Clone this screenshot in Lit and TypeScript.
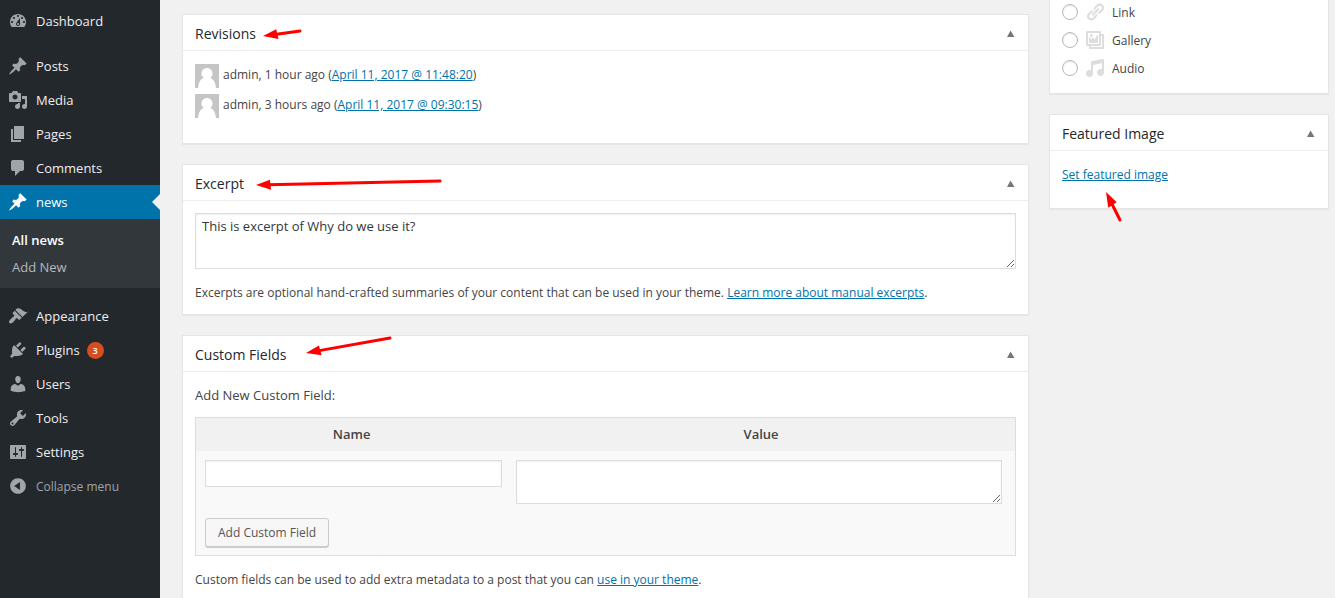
import { LitElement, html, css, svg, nothing } from "lit";
import { customElement, property } from "lit/decorators.js";

const ICONS: Record<string, string> = {
  dashboard:
    "M3.76 16h12.48c1.1-1.37 1.76-3.11 1.76-5 0-4.42-3.58-8-8-8s-8 3.58-8 8c0 1.89.66 3.63 1.76 5zM10 4c.55 0 1 .45 1 1s-.45 1-1 1-1-.45-1-1 .45-1 1-1zM6 6c.55 0 1 .45 1 1s-.45 1-1 1-1-.45-1-1 .45-1 1-1zm8 0c.55 0 1 .45 1 1s-.45 1-1 1-1-.45-1-1 .45-1 1-1zm-5.37 5.55L12 7v6c0 1.1-.9 2-2 2s-2-.9-2-2c0-.57.24-1.08.63-1.45zM4 10c.55 0 1 .45 1 1s-.45 1-1 1-1-.45-1-1 .45-1 1-1zm12 0c.55 0 1 .45 1 1s-.45 1-1 1-1-.45-1-1 .45-1 1-1zm-5 3c0-.55-.45-1-1-1s-1 .45-1 1 .45 1 1 1 1-.45 1-1z",
  pin: "M10.44 3.02l1.82-1.82 6.36 6.35-1.83 1.82c-1.05-.68-2.48-.57-3.41.36l-.75.75c-.92.93-1.04 2.35-.35 3.41l-1.83 1.82-2.41-2.41-2.8 2.79c-.42.42-3.38 2.71-3.8 2.29s1.86-3.39 2.28-3.81l2.79-2.79L4.1 9.36l1.83-1.82c1.05.69 2.48.57 3.4-.36l.75-.75c.93-.92 1.05-2.35.36-3.41z",
  media:
    "M13 11V4c0-.55-.45-1-1-1h-1.67L9 1H5L3.67 3H2c-.55 0-1 .45-1 1v7c0 .55.45 1 1 1h10c.55 0 1-.45 1-1zM7 4.5c1.38 0 2.5 1.12 2.5 2.5S8.38 9.5 7 9.5 4.5 8.38 4.5 7 5.62 4.5 7 4.5zM14 6h5v10.5c0 1.38-1.12 2.5-2.5 2.5S14 17.88 14 16.5s1.12-2.5 2.5-2.5c.17 0 .34.02.5.05V9h-3V6zm-4 8.05V13h2v3.5c0 1.38-1.12 2.5-2.5 2.5S7 17.88 7 16.5 8.12 14 9.500 14c.17 0 .34.02.5.05z",
  page: "M6 15V2h10v13H6zm-1 1h8v2H3V5h2v11z",
  comment:
    "M5 2h9c1.1 0 2 .9 2 2v7c0 1.1-.9 2-2 2h-2l-5 5v-5H5c-1.1 0-2-.9-2-2V4c0-1.1.9-2 2-2z",
  brush:
    "M14.48 11.06L7.41 3.99l1.5-1.5c.5-.56 2.3-.47 3.51.32 1.21.8 1.43 1.28 2.91 2.1 1.18.64 2.45 1.26 4.45.85zm-.71.71L6.7 4.7 4.93 6.47c-.39.39-.39 1.02 0 1.41l1.06 1.06c.39.39.39 1.03 0 1.42-.6.6-1.43 1.11-2.21 1.69-.35.26-.7.53-1.01.84C1.43 14.23.4 16.08 1.4 17.07c.99 1 2.84-.03 4.18-1.36.31-.31.58-.66.85-1.02.57-.78 1.08-1.61 1.69-2.21.39-.39 1.02-.39 1.41 0l1.06 1.06c.39.39 1.02.39 1.41 0z",
  plug: "M13.11 4.36L9.87 7.6 8 5.73l3.24-3.24c.35-.34 1.05-.2 1.56.32.52.51.66 1.21.31 1.55zm-8 1.77l.91-1.12 9.01 9.01-1.19.84c-.71.71-2.63 1.16-3.82 1.16H6.14L4.9 17.26c-.59.59-1.54.59-2.12 0-.59-.58-.59-1.53 0-2.12l1.24-1.24v-3.88c0-1.13.4-3.19 1.09-3.89zm7.26 3.97l3.24-3.24c.34-.35 1.04-.21 1.55.31.52.51.66 1.21.31 1.55l-3.24 3.25z",
  user: "M10 9.25c-2.27 0-2.73-3.44-2.73-3.44C7 4.02 7.82 2 9.97 2c2.16 0 2.98 2.02 2.71 3.81 0 0-.41 3.44-2.68 3.44zm0 2.57L12.72 10c2.39 0 4.52 2.33 4.52 4.53v2.49s-3.65 1.13-7.24 1.13c-3.65 0-7.24-1.13-7.24-1.13v-2.49c0-2.25 1.94-4.48 4.47-4.48z",
  wrench:
    "M16.68 9.77c-1.34 1.34-3.3 1.67-4.95.99l-5.41 6.52c-.99.99-2.59.99-3.58 0s-.99-2.59 0-3.57l6.52-5.42c-.68-1.65-.35-3.61.99-4.95 1.28-1.28 3.12-1.62 4.72-1.06l-2.89 2.89 2.82 2.82 2.86-2.87c.53 1.58.18 3.39-1.08 4.65zM3.81 16.21c.4.39 1.04.39 1.43 0 .4-.4.4-1.04 0-1.43-.39-.4-1.03-.4-1.43 0-.39.39-.39 1.03 0 1.43z",
  sliders:
    "M18 16V4c0-.55-.45-1-1-1H3c-.55 0-1 .45-1 1v12c0 .55.45 1 1 1h14c.55 0 1-.45 1-1zM8 11h1c.55 0 1 .45 1 1s-.45 1-1 1H8v1.5c0 .28-.22.5-.5.5s-.5-.22-.5-.5V13H6c-.55 0-1-.45-1-1s.45-1 1-1h1V5.5c0-.28.22-.5.5-.5s.5.22.5.5V11zm5-2h-1c-.55 0-1-.45-1-1s.45-1 1-1h1V5.5c0-.28.22-.5.5-.5s.5.22.5.5V7h1c.55 0 1 .45 1 1s-.45 1-1 1h-1v5.5c0 .28-.22.5-.5.5s-.5-.22-.5-.5V9z",
  collapse:
    "M10 2.16c4.33 0 7.84 3.51 7.84 7.84s-3.51 7.84-7.84 7.84S2.16 14.33 2.16 10 5.71 2.16 10 2.16zm2 11.72V6.12L6.18 9.97z",
  link: "M17.74 2.76c1.68 1.69 1.68 4.41 0 6.1l-1.53 1.52c-1.12 1.12-2.7 1.47-4.14 1.09l2.62-2.61.76-.77.76-.76c.84-.84.84-2.2 0-3.04-.84-.85-2.2-.85-3.04 0l-.77.76-3.38 3.38c-.37-1.44-.02-3.02 1.1-4.14l1.52-1.53c1.69-1.68 4.42-1.68 6.1 0zM8.59 13.43l5.34-5.34c.42-.42.42-1.1 0-1.52-.44-.43-1.13-.39-1.53 0l-5.33 5.34c-.42.42-.42 1.1 0 1.52.44.43 1.13.39 1.52 0zm-.76 2.29l4.14-4.15c.38 1.44.03 3.02-1.09 4.14l-1.52 1.53c-1.69 1.68-4.41 1.68-6.1 0-1.68-1.68-1.68-4.42 0-6.1l1.53-1.52c1.12-1.12 2.7-1.47 4.14-1.1l-4.14 4.15c-.85.84-.85 2.2 0 3.05.84.84 2.2.84 3.04 0z",
  gallery:
    "M16 4h1.96c.57 0 1.04.47 1.04 1.04v12.92c0 .57-.47 1.04-1.04 1.04H5.04C4.47 19 4 18.53 4 17.96V16H2.04C1.47 16 1 15.53 1 14.96V2.04C1 1.47 1.47 1 2.04 1h12.92c.57 0 1.04.47 1.04 1.04V4zM3 14h11V3H3v11zm5-8.5C8 4.67 7.33 4 6.5 4S5 4.67 5 5.5 5.67 7 6.5 7 8 6.33 8 5.5zm2 4.5s1-5 3-5v8H4V7c2 0 2 3 2 3s.33-2 2-2 2 2 2 2zm7 7V6h-1v8.96c0 .57-.47 1.04-1.04 1.04H6v1h11z",
  audio:
    "M6.99 3.08l11.02-2c.55-.08.99.45.99 1V14.5c0 1.94-1.57 3.5-3.5 3.5S12 16.44 12 14.5c0-1.93 1.57-3.5 3.5-3.5.54 0 1.04.14 1.5.35V5.08l-9 2V16c-.24 1.7-1.74 3-3.5 3C2.57 19 1 17.44 1 15.5 1 13.57 2.57 12 4.5 12c.54 0 1.04.14 1.5.35V4.08c0-.55.44-.91.99-1z",
};

const icon = (name: string) =>
  html`<svg class="icon" viewBox="0 0 20 20" width="20" height="20" aria-hidden="true">
    <path fill="currentColor" d=${ICONS[name]}></path>
  </svg>`;

interface MenuEntry {
  label: string;
  icon: string;
  count?: number;
  current?: boolean;
  submenu?: string[];
}

const MENU: MenuEntry[][] = [
  [{ label: "Dashboard", icon: "dashboard" }],
  [
    { label: "Posts", icon: "pin" },
    { label: "Media", icon: "media" },
    { label: "Pages", icon: "page" },
    { label: "Comments", icon: "comment" },
    { label: "news", icon: "pin", current: true, submenu: ["All news", "Add New"] },
  ],
  [
    { label: "Appearance", icon: "brush" },
    { label: "Plugins", icon: "plug", count: 3 },
    { label: "Users", icon: "user" },
    { label: "Tools", icon: "wrench" },
    { label: "Settings", icon: "sliders" },
  ],
];

@customElement("admin-menu")
export class AdminMenu extends LitElement {
  static styles = css`
    :host {
      display: flex;
      flex-direction: column;
      gap: 11px;
      flex: 0 0 160px;
      box-sizing: border-box;
      padding-top: 4px;
      background: #23282d;
      font-size: 13px;
      font-weight: 500;
      line-height: 34px;
    }
    ul {
      list-style: none;
      margin: 0;
      padding: 0;
    }
    .item,
    .collapse {
      display: flex;
      align-items: center;
      gap: 8px;
      height: 34px;
      padding: 0 0 0 8px;
      color: #eee;
      text-decoration: none;
    }
    .icon {
      flex: none;
      color: #a0a5aa;
    }
    .current {
      position: relative;
      background: #0073aa;
      color: #fff;
    }
    .current .icon {
      color: #fff;
    }
    .current::after {
      content: "";
      position: absolute;
      right: 0;
      top: 9px;
      border: 8px solid transparent;
      border-left-width: 0;
      border-right-color: #f1f1f1;
    }
    .count {
      width: 17px;
      height: 17px;
      margin-left: -1px;
      border-radius: 50%;
      background: #d54e21;
      color: #fff;
      font-size: 9px;
      font-weight: 600;
      line-height: 17px;
      text-align: center;
    }
    .submenu {
      padding: 8px 0 7px;
      background: #32373c;
      font-weight: 400;
      line-height: 27px;
    }
    .submenu a {
      display: block;
      padding: 0 12px;
      color: #b4b9be;
      text-decoration: none;
    }
    .submenu .selected {
      color: #fff;
      font-weight: 600;
    }
    .collapse {
      width: 100%;
      border: 0;
      background: none;
      color: #a0a5aa;
      font: inherit;
      font-size: 12px;
      font-weight: 400;
    }
    .collapse span {
      padding-top: 2px;
    }
  `;

  private entry(e: MenuEntry) {
    return html`<li>
      <a class="item ${e.current ? "current" : ""}" href="#">
        ${icon(e.icon)}<span>${e.label}</span>
        ${e.count ? html`<span class="count">${e.count}</span>` : nothing}
      </a>
      ${e.submenu
        ? html`<ul class="submenu">
            ${e.submenu.map(
              (s, i) => html`<li><a class=${i === 0 ? "selected" : ""} href="#">${s}</a></li>`
            )}
          </ul>`
        : nothing}
    </li>`;
  }

  render() {
    return MENU.map(
      (group, i) => html`<ul>
        ${group.map((e) => this.entry(e))}
        ${i === MENU.length - 1
          ? html`<li>
              <button class="collapse" type="button">${icon("collapse")}<span>Collapse menu</span></button>
            </li>`
          : nothing}
      </ul>`
    );
  }
}

@customElement("meta-box")
export class MetaBox extends LitElement {
  @property() heading = "";

  static styles = css`
    :host {
      display: block;
      border: 1px solid #e5e5e5;
      background: #fff;
      box-shadow: 0 1px 1px rgba(0, 0, 0, 0.04);
    }
    .head {
      display: flex;
      align-items: center;
      justify-content: space-between;
      height: 35px;
      padding: 0 12px;
      border-bottom: 1px solid #eee;
    }
    h2 {
      margin: 0;
      padding-top: 2px;
      color: #23282d;
      font-size: 14px;
      font-weight: 500;
      line-height: 20px;
    }
    .toggle {
      display: flex;
      padding: 0;
      border: 0;
      margin-right: 1px;
      background: none;
      color: #72777c;
    }
    .body {
      padding: 12px 12px 11px;
    }
  `;

  render() {
    return html`<div class="head">
        <h2>${this.heading}</h2>
        <button class="toggle" type="button" aria-label="Toggle panel: ${this.heading}">
          <svg width="8" height="9" viewBox="0 0 8 9" aria-hidden="true">
            <path fill="currentColor" d="M3.500 2.500L7.500 9H0z"></path>
          </svg>
        </button>
      </div>
      <div class="body"><slot></slot></div>`;
  }
}

const REVISIONS = [
  { author: "admin", ago: "1 hour ago", date: "April 11, 2017 @ 11:48:20" },
  { author: "admin", ago: "3 hours ago", date: "April 11, 2017 @ 09:30:15" },
];

const FORMATS = [
  { id: "link", label: "Link" },
  { id: "gallery", label: "Gallery" },
  { id: "audio", label: "Audio" },
];

/* Each arrow runs from its tail to its tip. */
const ARROWS = [
  { tail: [300, 31], tip: [263, 36] },
  { tail: [440, 181], tip: [256, 185] },
  { tail: [390, 338], tip: [306, 353] },
  { tail: [1120, 220], tip: [1106, 192] },
];

@customElement("app-root")
export class AppRoot extends LitElement {
  static styles = css`
    :host {
      position: relative;
      display: flex;
      height: 100vh;
      overflow: hidden;
      background: #f1f1f1;
      color: #444;
      font-family: "Open Sans", "Noto Sans", sans-serif;
      font-size: 12px;
      line-height: 20px;
    }
    .content {
      display: flex;
      flex: 1;
      align-items: flex-start;
      gap: 20px;
      min-width: 0;
      padding: 0 6px 0 22px;
    }
    .main {
      display: flex;
      flex: 1;
      flex-direction: column;
      gap: 20px;
      min-width: 0;
      padding-top: 14px;
    }
    .side {
      display: flex;
      flex: 0 0 280px;
      flex-direction: column;
      gap: 20px;
      min-width: 0;
    }
    a {
      color: #0073aa;
    }
    p {
      margin: 0;
    }
    .revisions {
      display: grid;
      gap: 6px;
      margin: 0;
      padding: 1px 0 14px;
      line-height: 22px;
      list-style: none;
    }
    .revisions li {
      display: flex;
      align-items: flex-start;
      gap: 4px;
      height: 24px;
    }
    .formats {
      display: grid;
      gap: 4px;
      margin: 0;
      padding: 0 12px 13px;
      border: 1px solid #e5e5e5;
      border-top: 0;
      background: #fff;
      box-shadow: 0 1px 1px rgba(0, 0, 0, 0.04);
    }
    .format {
      display: flex;
      align-items: center;
      height: 24px;
    }
    .format .icon {
      margin: 0 7px;
      color: #ddd;
    }
    .format label {
      padding-top: 2px;
    }
    .format input {
      width: 16px;
      height: 16px;
      margin: 0;
      border: 1px solid #b4b9be;
      border-radius: 50%;
      appearance: none;
      background: #fff;
      box-shadow: inset 0 1px 2px rgba(0, 0, 0, 0.1);
    }
    .field {
      display: block;
      box-sizing: border-box;
      width: 100%;
      margin: 0;
      border: 1px solid #ddd;
      border-radius: 0;
      background: #fff;
      box-shadow: inset 0 1px 2px rgba(0, 0, 0, 0.07);
      color: #32373c;
      font: inherit;
      font-size: 13px;
      padding: 2px 6px;
    }
    .excerpt {
      height: 56px;
    }
    .note {
      padding-top: 14px;
    }
    .featured {
      padding: 2px 0 12px;
    }
    .subtitle {
      padding: 1px 0 12px;
      font-size: 13px;
      font-weight: 500;
    }
    .newmeta {
      width: 100%;
      border: 1px solid #ddd;
      border-spacing: 0;
      table-layout: fixed;
      background: #f9f9f9;
    }
    .newmeta th {
      height: 31px;
      padding: 0 0 2px;
      background: #f1f1f1;
      font-size: 13px;
      font-weight: 600;
    }
    .newmeta td {
      padding: 9px 5px 0 9px;
      vertical-align: top;
    }
    .newmeta .value {
      padding: 9px 13px 0 9px;
    }
    .newmeta .actions {
      padding: 14px 9px 8px;
    }
    .name-col {
      width: 38%;
    }
    .name-field {
      height: 27px;
    }
    .value-field {
      height: 44px;
    }
    .button {
      height: 29px;
      padding: 0 12px;
      border: 1px solid #ccc;
      border-radius: 3px;
      background: #f7f7f7;
      box-shadow: 0 1px 0 #ccc;
      color: #555;
      font: inherit;
    }
    .arrows {
      position: absolute;
      inset: 0;
      width: 100%;
      height: 100%;
      pointer-events: none;
    }
  `;

  private arrow({ tail, tip }: { tail: number[]; tip: number[] }) {
    const angle = (Math.atan2(tip[1] - tail[1], tip[0] - tail[0]) * 180) / Math.PI;
    const length = Math.hypot(tip[0] - tail[0], tip[1] - tail[1]);
    return svg`<g transform="translate(${tip[0]} ${tip[1]}) rotate(${angle})">
      <path d="M${-length} 0H-12" stroke="#f00" stroke-width="3" stroke-linecap="round"></path>
      <path d="M0 0L-15 -5L-14 5z" fill="#f00"></path>
    </g>`;
  }

  render() {
    return html`
      <admin-menu></admin-menu>
      <div class="content">
        <main class="main">
          <meta-box heading="Revisions">
            <ul class="revisions">
              ${REVISIONS.map(
                (r) => html`<li>
                  <svg width="24" height="24" viewBox="0 0 24 24" aria-hidden="true">
                    <path fill="#c5c5c5" d="M0 0h24v24H0z"></path>
                    <path
                      fill="#fff"
                      d="M12 4a5.500 5.500 0 0 1 3.300 9.900c3.400 1.200 5.200 4.600 5.700 10.100H3c.5-5.500 2.300-8.900 5.700-10.100A5.500 5.500 0 0 1 12 4z"
                    ></path>
                  </svg>
                  <span>${r.author}, ${r.ago} (<a href="#">${r.date}</a>)</span>
                </li>`
              )}
            </ul>
          </meta-box>
          <meta-box heading="Excerpt">
            <textarea
              class="field excerpt"
              aria-label="Excerpt"
              .value=${"This is excerpt of Why do we use it?"}
            ></textarea>
            <p class="note">
              Excerpts are optional hand-crafted summaries of your content that can be used in your theme.
              <a href="#">Learn more about manual excerpts</a>.
            </p>
          </meta-box>
          <meta-box heading="Custom Fields">
            <p class="subtitle">Add New Custom Field:</p>
            <table class="newmeta">
              <thead>
                <tr>
                  <th class="name-col"><label for="metakey">Name</label></th>
                  <th><label for="metavalue">Value</label></th>
                </tr>
              </thead>
              <tbody>
                <tr>
                  <td><input class="field name-field" id="metakey" type="text" /></td>
                  <td class="value"><textarea class="field value-field" id="metavalue"></textarea></td>
                </tr>
                <tr>
                  <td class="actions" colspan="2">
                    <button class="button" type="button">Add Custom Field</button>
                  </td>
                </tr>
              </tbody>
            </table>
            <p class="note">
              Custom fields can be used to add extra metadata to a post that you can
              <a href="#">use in your theme</a>.
            </p>
          </meta-box>
        </main>
        <aside class="side">
          <div class="formats" role="radiogroup" aria-label="Format">
            ${FORMATS.map(
              (f) => html`<div class="format">
                <input type="radio" name="format" id=${f.id} />
                ${icon(f.id)}
                <label for=${f.id}>${f.label}</label>
              </div>`
            )}
          </div>
          <meta-box heading="Featured Image">
            <p class="featured"><a href="#">Set featured image</a></p>
          </meta-box>
        </aside>
      </div>
      <svg class="arrows" aria-hidden="true">${ARROWS.map((a) => this.arrow(a))}</svg>
    `;
  }
}
